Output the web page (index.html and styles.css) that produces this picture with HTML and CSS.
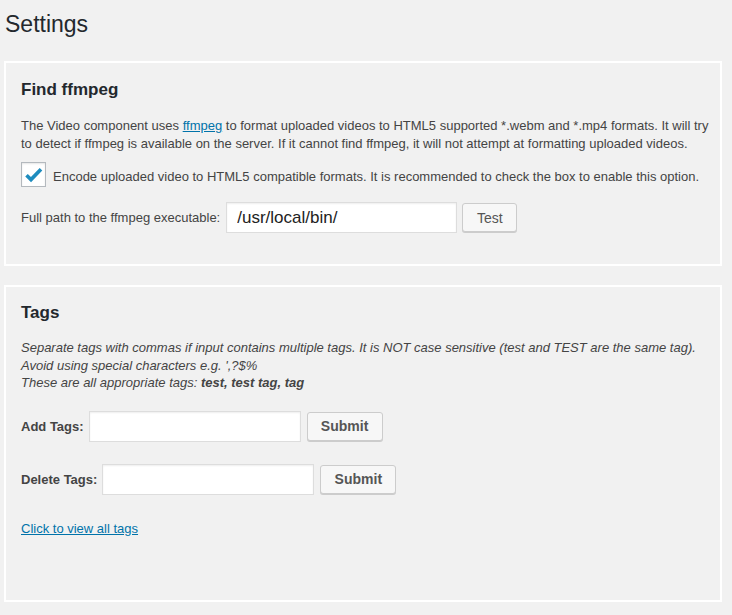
FILE: index.html
```html
<!DOCTYPE html>
<html>
<head>
<meta charset="utf-8">
<link rel="stylesheet" href="styles.css">
</head>
<body>
<div class="wrap">
  <h1 class="title">Settings</h1>

  <section class="panel panel-ffmpeg">
    <h3 class="panel-title">Find ffmpeg</h3>
    <p class="desc">The Video component uses <a href="#" class="link">ffmpeg</a> to format uploaded videos to HTML5 supported *.webm and *.mp4 formats. It will try to detect if ffmpeg is available on the server. If it cannot find ffmpeg, it will not attempt at formatting uploaded videos.</p>
    <div class="check-row">
      <span class="checkbox">
        <svg width="18" height="16" viewBox="0 0 18 16"><path d="M1.5 8.2 L6 12.6 L16 2.2" fill="none" stroke="#1e8cbe" stroke-width="3.6" stroke-linecap="butt" stroke-linejoin="miter"/></svg>
      </span>
      <span class="check-label">Encode uploaded video to HTML5 compatible formats. It is recommended to check the box to enable this option.</span>
    </div>
    <div class="field-row path-row">
      <label class="path-label">Full path to the ffmpeg executable:</label>
      <input class="text-input path-input" type="text" value="/usr/local/bin/">
      <button class="btn btn-test">Test</button>
    </div>
  </section>

  <section class="panel panel-tags">
    <h3 class="panel-title">Tags</h3>
    <p class="note">Separate tags with commas if input contains multiple tags. It is NOT case sensitive (test and TEST are the same tag).<br>Avoid using special characters e.g. ',?$%<br>These are all appropriate tags: <b>test, test tag, tag</b></p>
    <div class="field-row add-row">
      <label class="bold-label">Add Tags:</label>
      <input class="text-input tag-input" type="text">
      <button class="btn btn-submit">Submit</button>
    </div>
    <div class="field-row delete-row">
      <label class="bold-label">Delete Tags:</label>
      <input class="text-input tag-input" type="text">
      <button class="btn btn-submit">Submit</button>
    </div>
    <a href="#" class="link all-tags">Click to view all tags</a>
  </section>
</div>
</body>
</html>
```

FILE: styles.css
```css
html, body {
  margin: 0;
  padding: 0;
  background: #f1f1f1;
}
body {
  font-family: "Liberation Sans", Arial, Helvetica, sans-serif;
  font-size: 13px;
  color: #444;
}
.wrap {
  padding: 0 0 0 4px;
  width: 718px;
}
.title {
  margin: 0;
  padding: 10px 0 0 1px;
  font-size: 23px;
  line-height: 29px;
  font-weight: 400;
  color: #23282d;
  height: 51px;
}
.panel {
  border: 2px solid #fff;
  padding: 0 4px 0 15px;
  box-sizing: border-box;
  width: 718px;
}
.panel-ffmpeg {
  height: 205px;
  padding-top: 17px;
}
.panel-tags {
  margin-top: 19px;
  height: 317px;
  padding-top: 16px;
}
.panel-title {
  margin: 0;
  font-size: 17px;
  line-height: 20px;
  font-weight: 700;
  color: #23282d;
}
.desc {
  margin: 17px 0 0;
  line-height: 18px;
}
.link {
  color: #0073aa;
  text-decoration: underline;
}
.check-row {
  display: flex;
  align-items: center;
  margin-top: 9px;
  height: 25px;
}
.checkbox {
  width: 25px;
  height: 25px;
  box-sizing: border-box;
  border: 1px solid #b4b9be;
  background: #fff;
  display: flex;
  align-items: center;
  justify-content: center;
  box-shadow: inset 0 1px 2px rgba(0,0,0,0.1);
}
.checkbox svg {
  display: block;
  margin-top: 1px;
}
.check-label {
  margin-left: 7px;
  padding-top: 4px;
}
.field-row {
  display: flex;
  align-items: center;
}
.path-row {
  margin-top: 15px;
}
.path-label {
  margin-right: 6px;
}
.text-input {
  box-sizing: border-box;
  height: 31px;
  border: 1px solid #ddd;
  background: #fff;
  box-shadow: inset 0 1px 2px rgba(0,0,0,0.07);
  margin: 0;
  font-family: "Liberation Sans", Arial, sans-serif;
  outline: none;
}
.path-input {
  width: 231px;
  font-size: 17px;
  color: #222;
  padding: 0 10px;
}
.tag-input {
  width: 212px;
  padding: 0 8px;
  font-size: 14px;
}
.btn {
  box-sizing: border-box;
  height: 29px;
  margin: 0 0 0 5px;
  border: 1px solid #ccc;
  border-radius: 3px;
  background: #f7f7f7;
  box-shadow: 0 1px 0 #ccc;
  color: #555;
  font-family: "Liberation Sans", Arial, sans-serif;
  padding: 0;
}
.btn-test {
  width: 55px;
  font-size: 14px;
}
.btn-submit {
  width: 76px;
  font-size: 14px;
  font-weight: 700;
  margin-left: 6px;
}
.note {
  margin: 16px 0 0;
  font-style: italic;
  line-height: 17.5px;
}
.note b {
  font-weight: 700;
}
.bold-label {
  font-weight: 700;
  margin-right: 5px;
}
.add-row {
  margin-top: 19px;
}
.delete-row {
  margin-top: 22px;
}
.all-tags {
  display: inline-block;
  margin-top: 25px;
  line-height: 18px;
}
```
